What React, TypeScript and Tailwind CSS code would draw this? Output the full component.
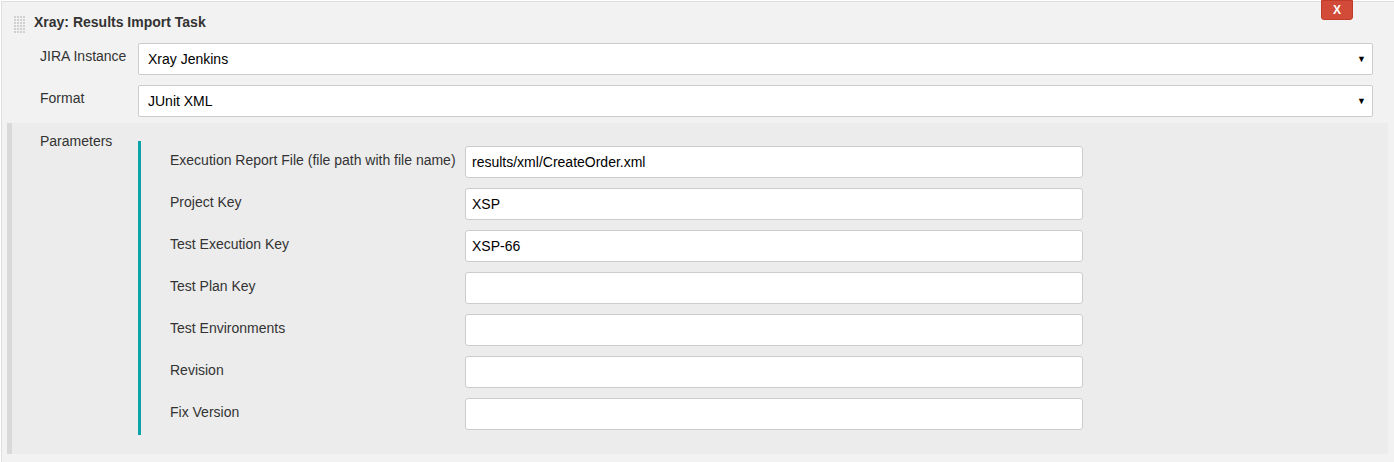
import React from 'react';

const params = [
  { label: 'Execution Report File (file path with file name)', value: 'results/xml/CreateOrder.xml' },
  { label: 'Project Key', value: 'XSP' },
  { label: 'Test Execution Key', value: 'XSP-66' },
  { label: 'Test Plan Key', value: '' },
  { label: 'Test Environments', value: '' },
  { label: 'Revision', value: '' },
  { label: 'Fix Version', value: '' },
];

const DragHandle = () => (
  <svg width="12" height="18" viewBox="0 0 12 18" className="shrink-0">
    {Array.from({ length: 6 }).map((_, r) =>
      Array.from({ length: 4 }).map((_, c) => (
        <rect key={`${r}-${c}`} x={c * 3} y={r * 3} width="2" height="2" fill="#d0d0d0" />
      ))
    )}
  </svg>
);

const SelectBox = ({ value }: { value: string }) => (
  <div className="relative w-[1235px] h-[32px] bg-white border border-[#cccccc] rounded-[2px] flex items-center pl-[9px]">
    <span className="text-[14px] leading-[16px] text-black">{value}</span>
    <span className="absolute right-[6px] top-[9px] text-[9px] text-black">▼</span>
  </div>
);

const App: React.FC = () => {
  return (
    <div
      className="relative w-[1394px] h-[462px] bg-white pt-px pl-px overflow-hidden"
      style={{ fontFamily: '"Liberation Sans", Arial, sans-serif' }}
    >
      <div className="h-full bg-[#f2f2f2] border-t border-l border-[#dedede]">
        {/* Header */}
        <div className="flex items-start gap-[8px] pl-[12px] pt-[14px] h-[41px]">
          <DragHandle />
          <span className="text-[14px] leading-[16px] font-bold text-[#333333] mt-[-2px]">
            Xray: Results Import Task
          </span>
        </div>

        {/* Selects */}
        <div className="flex flex-col gap-[10px]">
          <div className="flex items-start">
            <div className="w-[136px] pl-[38px] pt-[5px] text-[14px] leading-[16px] text-[#333333]">JIRA Instance</div>
            <SelectBox value="Xray Jenkins" />
          </div>
          <div className="flex items-start">
            <div className="w-[136px] pl-[38px] pt-[5px] text-[14px] leading-[16px] text-[#333333]">Format</div>
            <SelectBox value="JUnit XML" />
          </div>
        </div>

        {/* Parameters */}
        <div className="mt-[6px] ml-[5px] w-[1381px] bg-[#ececec] border-l-[5px] border-[#d9d9d9] pt-[18px] pb-[19px] flex items-start">
          <div className="w-[126px] pl-[28px] -mt-[8px] text-[14px] leading-[16px] text-[#333333]">Parameters</div>
          <div className="border-l-[3px] border-[#0ca3a8] py-[5px] pl-[29px] flex flex-col gap-[10px]">
            {params.map((p) => (
              <div key={p.label} className="flex items-center">
                <div className="w-[295px] text-[14px] leading-[16px] text-[#333333] -mt-[5px]">{p.label}</div>
                <div className="w-[618px] h-[32px] bg-white border border-[#cccccc] rounded-[3px] flex items-center pl-[6px] text-[14px] text-black">
                  {p.value}
                </div>
              </div>
            ))}
          </div>
        </div>
      </div>

      {/* Delete button */}
      <button className="absolute top-0 left-[1321px] w-[32px] h-[20px] bg-[#d24a38] border border-[#c03b2a] rounded-b-[3px] text-white text-[12px] font-bold leading-none flex items-center justify-center">
        X
      </button>
    </div>
  );
};

export default App;
